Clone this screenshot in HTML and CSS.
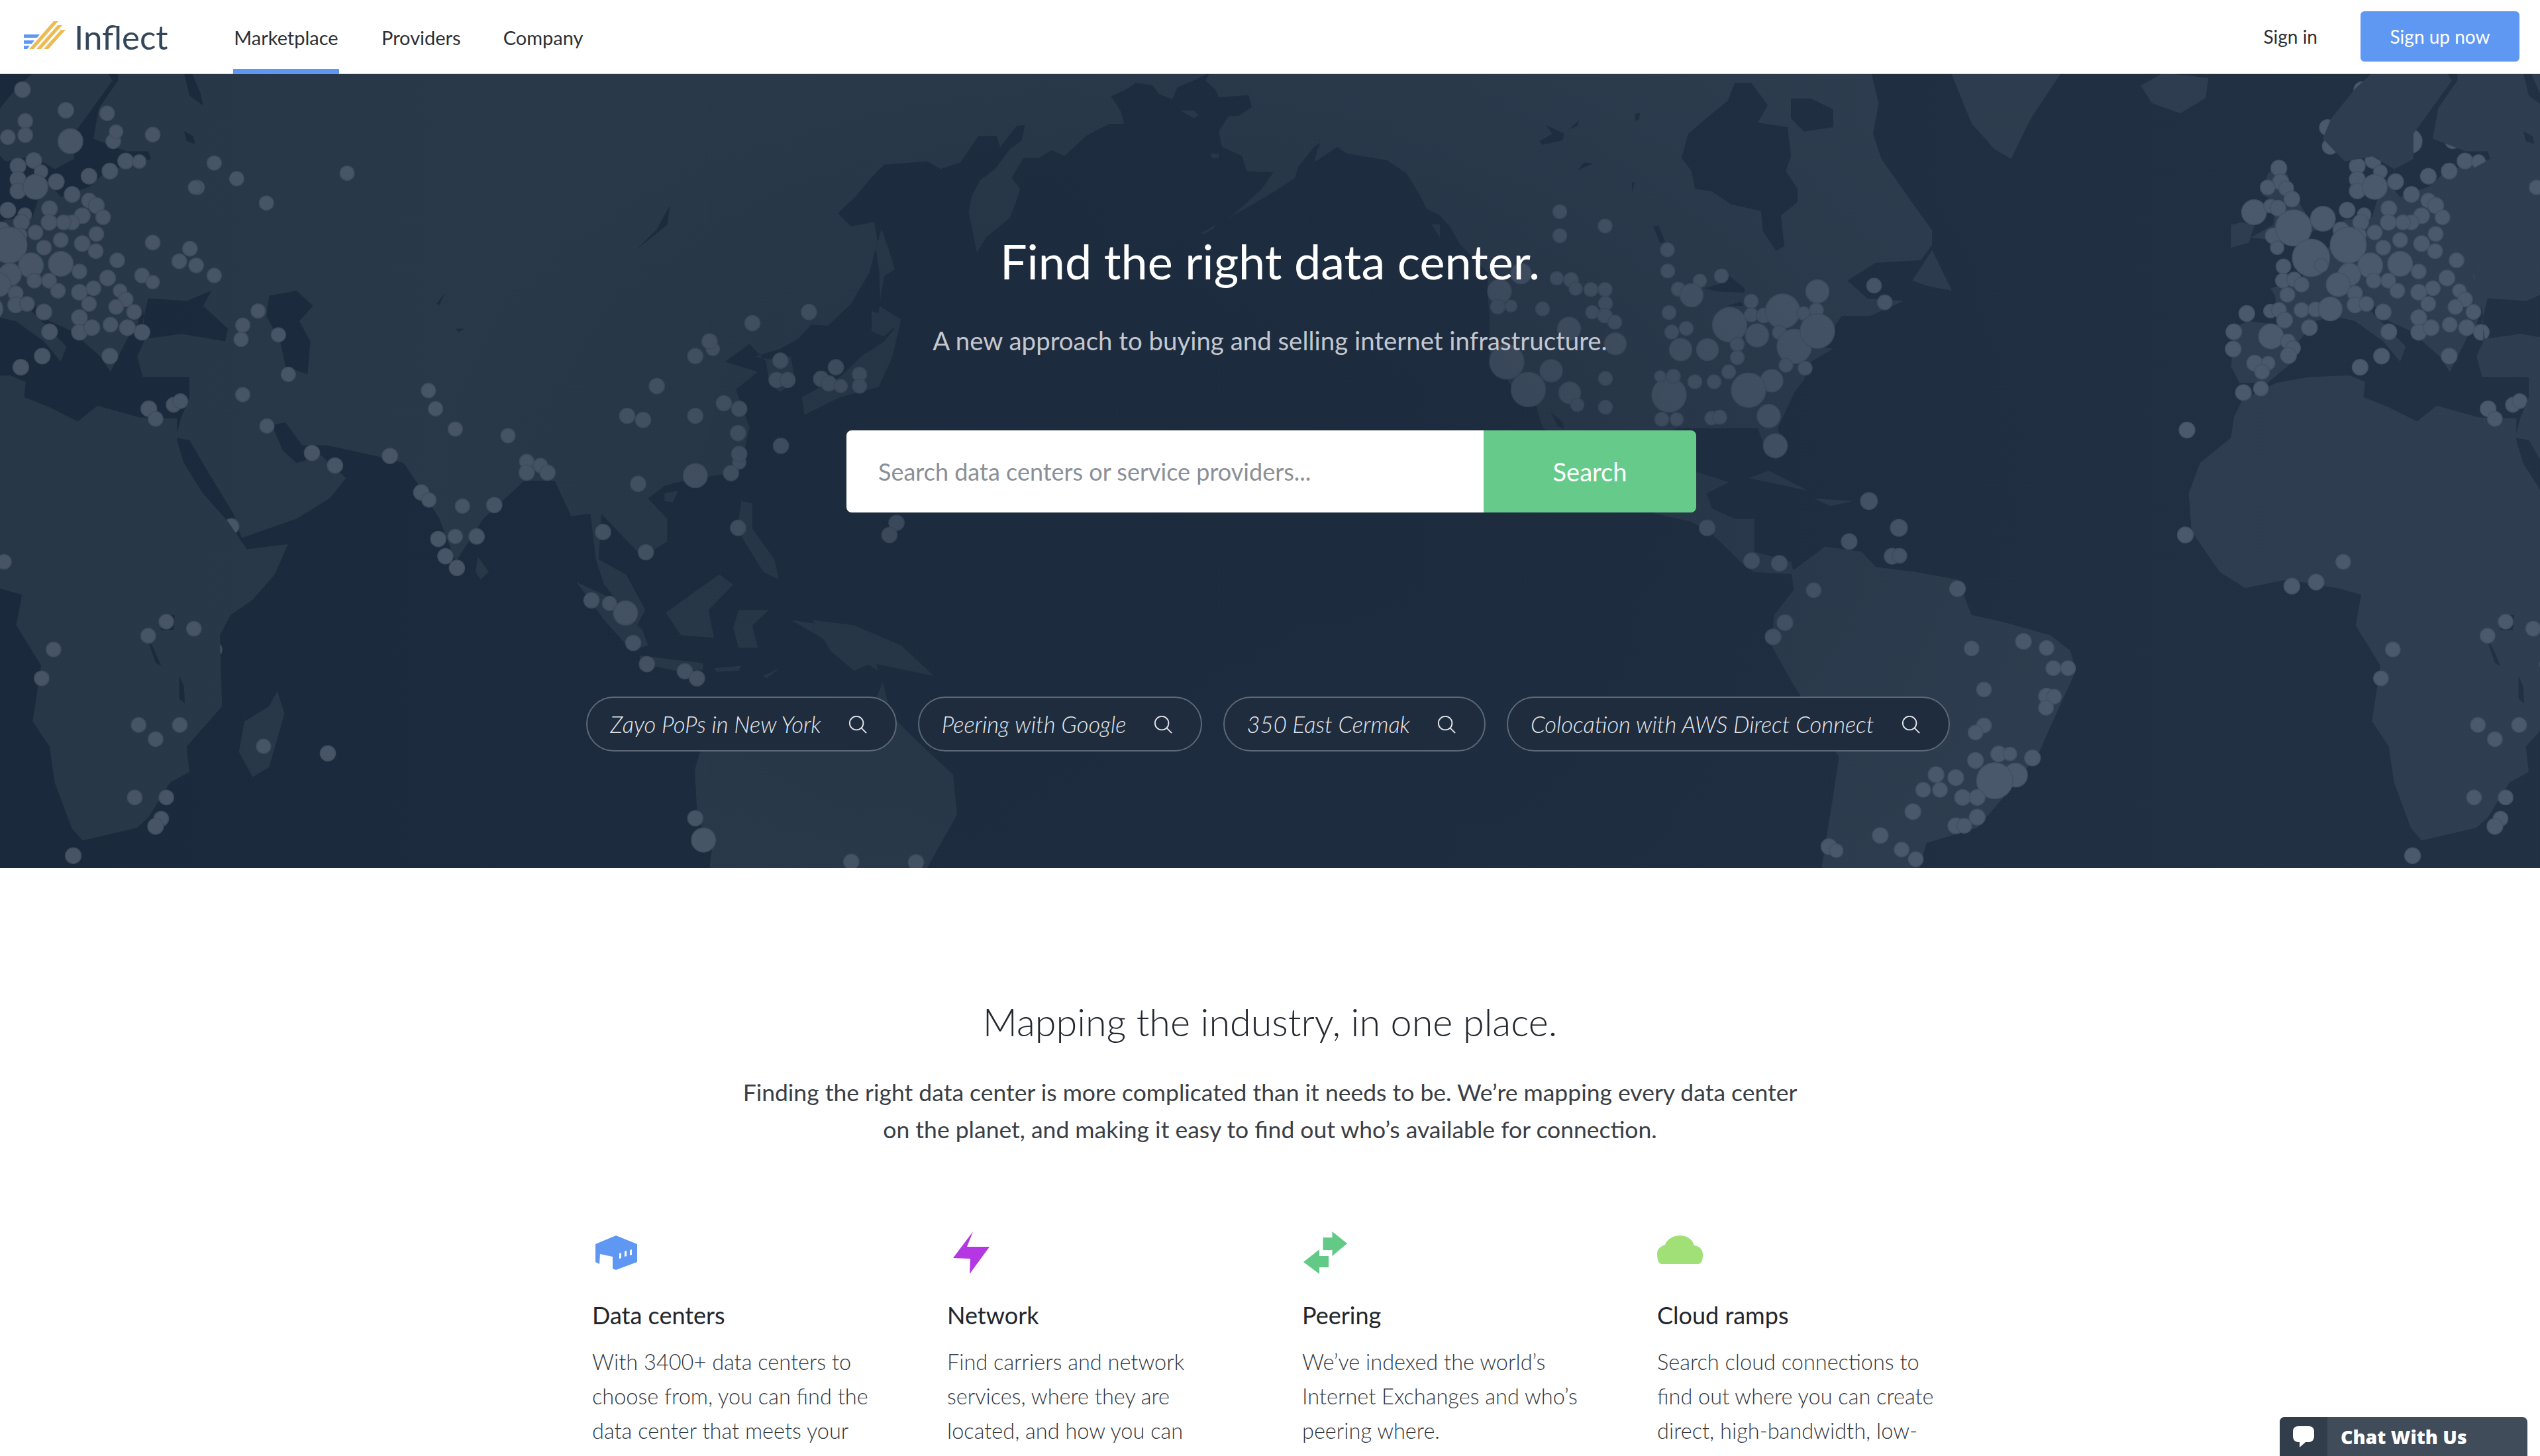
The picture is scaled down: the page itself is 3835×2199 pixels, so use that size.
FILE: index.html
```html
<!DOCTYPE html>
<html lang="en">
<head>
  <meta charset="UTF-8">
  <title>Inflect - Find the right data center</title>
  <link rel="stylesheet" href="styles.css">
</head>
<body>

  <!-- Top Bar -->
  <header class="topbar">
    <a class="brand" href="#">
      <svg class="brand-mark" viewBox="0 0 64 43" width="64" height="43">
        <path class="mark-blue" d="M0 20H24L20 25H0ZM0 29H16L12 34H0ZM0 37H9L5 42H0Z"/>
        <path class="mark-gold" d="M8 42L45 0H52L15 42ZM19 42L51 6H58L26 42ZM30 42L56 13H63L37 42Z"/>
      </svg>
      <span class="brand-name">Inflect</span>
    </a>
    <nav class="nav-links">
      <a class="nav-link active" href="#">Marketplace</a>
      <a class="nav-link" href="#">Providers</a>
      <a class="nav-link" href="#">Company</a>
    </nav>
    <div class="nav-right">
      <a class="sign-in" href="#">Sign in</a>
      <a class="sign-up" href="#">Sign up now</a>
    </div>
  </header>

  <!-- Hero -->
  <section class="hero">
    <svg class="map" viewBox="0 112 3835 1199" width="3835" height="1199">
      <g id="world">
        <!-- europe, africa and the americas traced at this scale -->
        <g transform="translate(2500 110) scale(.8514 .7653)">
          <path class="land" d="M1020 505L1050 490 1105 497 1098 440 1090 425 1140 410 1165 380 1205 330 1220 290 1270 285 1285 230 1290 205 1320 245 1370 225 1400 195 1445 180 1500 165 1500 300 1455 500 1440 520 1408 590 1390 560 1340 510 1300 490 1262 445 1268 470 1330 540 1320 570 1290 530 1240 490 1200 480 1170 490 1140 530 1125 575 1085 612 1035 612 1020 580 1025 530Z"/>
          <path class="land" d="M1105 175L1085 200 1075 240 1100 255 1095 300 1055 325 1130 335 1170 310 1135 245 1120 200Z"/>
          <path class="land" d="M1020 300L1040 295 1062 300 1052 335 1020 345Z"/>
          <path class="land" d="M860 25L900 0 980 10 975 50 930 80 880 60Z"/>
          <path class="land" d="M520 -10L725 -10 665 90 630 170 600 150 560 100Z"/>
          <path class="land" fill-rule="evenodd" d="M1025 680L1040 645 1100 612 1160 600 1230 597 1258 610 1255 640 1300 660 1350 688 1385 657 1460 680 1526 682 1526 725 1538 770 1572 830 1616 885 1650 940 1723 930 1699 990 1660 1040 1621 1070 1602 1110 1606 1250 1543 1330 1548 1380 1514 1400 1475 1470 1455 1490 1358 1515 1339 1490 1309 1400 1300 1330 1270 1280 1285 1170 1241 1090 1251 1030 1212 1018 1120 1000 1045 1017 1000 985 950 905 945 830 965 770 1020 720ZM1495 1072L1522 1070 1520 1100 1498 1100ZM1476 1125L1482 1130 1498 1170 1488 1165ZM1530 1190L1538 1210 1540 1245 1530 1235Z"/>
          <path class="land" d="M240 985L300 935 365 945 390 975 460 985 535 1000 560 1070 620 1085 700 1110 735 1140 745 1180 700 1290 680 1340 640 1400 570 1490 480 1520 460 1600 290 1600 325 1350 240 1200 205 1130 210 1070 245 1020Z"/>
          <path class="land" d="M455 410L490 350 525 430 480 420Z"/>
          <path class="land" d="M165 800L200 785 270 825 230 815ZM280 840L350 845 310 855Z"/>
        </g>
        <g transform="translate(1984 112) scale(.5 .3333)">
          <path class="land" fill-rule="evenodd" d="M-313 -10L-328 30-298 70-288 105-198 95-188 150-228 190-258 190-288 260-278 330-218 370-203 440-123 445-158 520-238 630-268 660-208 610-118 530-58 470-48 420 0 330 20 310 10 345 0 400 30 370 70 330 100 360 220 390 280 450 320 550 340 610 380 640 410 690 440 770 525 900 525 1010 530 1100 530 1280 600 1420 670 1500 690 1600 850 1800 1032 1992 1134 2026 1194 2072 1304 2233 1330 2256 1449 2267 1441 2210 1330 2164 1330 2015 1270 2015 1202 1968 1185 1900 1253 1849 1150 1800 1030 1640 1100 1604 1340 1604 1360 1690 1395 1750 1420 1690 1400 1604 1450 1444 1480 1384 1500 1304 1568 1244 1526 1234 1594 1096 1679 1096 1781 1027 1671 1016 1611 935 1696 855 1832 843 1866 775 1866 706 1832 637 1713 384 1688 270 1705 132 1679 -30ZM1110 380L1130 270 1200 180 1250 120 1270 40 1320 40 1370 140 1340 220 1430 240 1440 370 1425 440 1460 520 1460 580 1410 640 1420 780 1395 800 1355 710 1350 620 1260 590 1200 530 1150 520 1140 440ZM1440 110L1500 110 1568 160 1568 240 1480 260 1440 200ZM700 230L755 270 750 300 690 320 680 305 720 270ZM770 250L800 210 795 235ZM795 440L815 400 845 405 810 425ZM1025 690L1040 685 1060 760 1045 765ZM960 490L968 490 960 535ZM970 180L985 175 980 210 968 210ZM1180 970L1225 950 1250 910 1300 970 1300 990 1215 985ZM1250 1050L1290 1030 1295 1050ZM355 680L380 680 380 740ZM715 1534L750 1574 755 1609 735 1594Z"/>
        </g>
        <g transform="translate(1200 112) scale(.5 .3333)">
          <path class="land" d="M-20 -10L1015 -10 1030 40 1000 70 955 100 985 170 995 225 950 225 880 280 815 370 775 345 735 380 690 380 655 470 680 520 670 570 650 650 610 700 580 735 550 810 525 620 535 550 560 480 605 430 650 340 685 300 695 230 670 235 620 330 610 280 555 280 500 400 440 430 400 395 270 410 230 470 180 560 130 630 170 690 240 670 250 760 225 900 170 1040 100 1140 50 1135 10 1200 -20 1220Z"/>
          <path class="land" d="M1030 40L1015 -10 1255 -10 1210 25 1155 60 1140 115 1100 90 1080 50Z"/>
          <path class="land" d="M262 700L285 800 302 885 270 915 258 1020 255 900 245 790Z"/>
          <path class="land" d="M255 1050L320 1110 310 1150 230 1160 215 1200 250 1120Z"/>
          <path class="land" d="M1225 720L1245 705 1270 680 1265 700 1235 725ZM1165 165L1205 165 1220 185 1205 200ZM1255 360L1280 360 1280 380 1260 380Z"/>
        </g>
        <!-- asia and the islands -->
        <g transform="translate(0 110) scale(.8292 .7653)">
          <path class="land" fill-rule="evenodd" d="M215 -10L1500 -10 1500 470 1453 525 1420 545 1375 560 1400 565 1440 560 1448 610 1420 630 1400 610 1395 570 1365 535 1320 570 1380 590 1340 625 1365 700 1350 770 1330 790 1245 805 1210 815 1180 840 1215 880 1215 925 1170 955 1125 905 1095 870 1090 960 1140 990 1175 1060 1160 1090 1100 1010 1085 960 1075 870 1040 875 1010 805 955 805 880 880 830 965 800 880 760 810 735 770 680 755 595 735 550 735 520 690 495 695 515 745 540 770 585 755 630 800 600 840 540 880 440 918 425 870 380 790 345 725 320 720 330 680 345 640 345 600 260 600 250 560 262 530 262 480 245 400 225 200 275 170 270 155 230 155 170 130 180 70 215 15ZM270 445L340 450 385 430 370 460 415 505 410 530 330 515 265 525 260 490ZM490 440L540 430 570 460 545 490 565 530 560 595 520 580 510 530 485 480ZM1220 262L1215 300 1160 348 1195 310ZM795 455L810 435 800 458ZM830 505L845 505 835 512ZM335 0L345 45 370 65 365 40 345 -10ZM335 115L352 125 355 140 340 135Z"/>
          <path class="land" d="M70 -10L30 30-15 90-30 130 10 175 60 165 100 190 135 170 135 120 175 60 205 15 190 -10Z"/>
          <path class="land" d="M870 955L890 985 875 1000 866 985Z"/>
          <path class="land" d="M1050 1005L1100 1030 1170 1100 1180 1130 1150 1140 1100 1080Z"/>
          <path class="land" d="M1165 1150L1280 1165 1280 1178 1230 1180 1165 1165ZM1300 1175L1350 1170 1345 1180 1305 1182ZM1390 1190L1420 1175 1395 1195Z"/>
          <path class="land" d="M1310 990L1335 1010 1290 1060 1300 1115 1240 1110 1212 1065 1245 1040 1270 1020Z"/>
          <path class="land" d="M1345 1060L1400 1060 1370 1090 1380 1135 1345 1135 1335 1095Z"/>
          <path class="land" d="M1350 845L1370 850 1370 900 1410 960 1418 1000 1390 985 1350 915 1345 880Z"/>
          <path class="land" d="M1210 830L1235 825 1225 848 1210 845Z"/>
          <path class="land" d="M505 1220L518 1265 490 1370 460 1390 435 1340 445 1280 490 1250Z"/>
          <path class="land" d="M1568 560L1530 600 1460 640 1465 675 1530 640 1600 620 1625 560 1640 490 1610 530Z"/>
          <path class="land" d="M1440 1080L1570 1100 1600 1180 1520 1130Z"/>
        </g>
        <g transform="translate(1200 110) scale(.8929 .7653)">
          <path class="land" d="M30 1080L100 1090 180 1130 235 1190 130 1165 100 1180 60 1140Z"/>
          <path class="land" d="M130 470L180 490 150 520 130 510Z"/>
        </g>
        <path class="land" d="M1056 1137L1150 1090 1240 1085 1270 1085 1290 1060 1310 1085 1333 1030 1340 1060 1355 1090 1380 1115 1439 1170 1445 1230 1395 1320 1070 1320 1075 1280 1053 1235 1049 1163Z"/>
        <g id="dots"></g>
      </g>
      <use href="#world" x="-3532"/>
      <use href="#world" x="3532"/>
    </svg>
    <div class="hero-shade"></div>

    <div class="hero-content">
      <h1>Find the right data center.</h1>
      <p class="hero-sub">A new approach to buying and selling internet infrastructure.</p>
      <form class="search-form">
        <input class="search-input" type="text" placeholder="Search data centers or service providers...">
        <button class="search-button" type="button">Search</button>
      </form>
      <div class="chips">
        <a class="chip" href="#">Zayo PoPs in New York
          <svg class="chip-icon" viewBox="0 0 30 30" width="28" height="28"><circle cx="13" cy="13" r="11"/><path d="M21 21L29 29"/></svg>
        </a>
        <a class="chip" href="#">Peering with Google
          <svg class="chip-icon" viewBox="0 0 30 30" width="28" height="28"><circle cx="13" cy="13" r="11"/><path d="M21 21L29 29"/></svg>
        </a>
        <a class="chip" href="#">350 East Cermak
          <svg class="chip-icon" viewBox="0 0 30 30" width="28" height="28"><circle cx="13" cy="13" r="11"/><path d="M21 21L29 29"/></svg>
        </a>
        <a class="chip" href="#">Colocation with AWS Direct Connect
          <svg class="chip-icon" viewBox="0 0 30 30" width="28" height="28"><circle cx="13" cy="13" r="11"/><path d="M21 21L29 29"/></svg>
        </a>
      </div>
    </div>
  </section>

  <!-- Content -->
  <section class="intro">
    <h2>Mapping the industry, in one place.</h2>
    <p class="intro-text">Finding the right data center is more complicated than it needs to be. We’re mapping every data center<br>on the planet, and making it easy to find out who’s available for connection.</p>

    <div class="features">
      <div class="feature">
        <div class="feature-icon icon-datacenter">
          <svg viewBox="0 0 64 52" width="64" height="52"><path class="blue" fill-rule="evenodd" d="M0 13L31 0 63 13V40L31 52 26 50V32L7 28 6 43 0 40ZM36 27V35L39 34V26ZM44 24V32L47 31V23ZM52 22V30L55 29V21Z"/></svg>
        </div>
        <h3>Data centers</h3>
        <p>With 3400+ data centers to<br>choose from, you can find the<br>data center that meets your</p>
      </div>
      <div class="feature">
        <div class="feature-icon icon-network">
          <svg viewBox="0 0 55 65" width="55" height="65"><path class="purple" d="M30 0L21 23H55L25 64 26 41 0 40Z"/></svg>
        </div>
        <h3>Network</h3>
        <p>Find carriers and network<br>services, where they are<br>located, and how you can</p>
      </div>
      <div class="feature">
        <div class="feature-icon icon-peering">
          <svg viewBox="0 0 66 65" width="66" height="65"><path class="green" d="M43.5 0L66 18 43.5 37V28H29.5V9H43.5ZM24 27V37H38V54H24V64L0 46Z"/></svg>
        </div>
        <h3>Peering</h3>
        <p>We’ve indexed the world’s<br>Internet Exchanges and who’s<br>peering where.</p>
      </div>
      <div class="feature">
        <div class="feature-icon icon-cloud">
          <svg viewBox="0 0 69 43" width="69" height="43"><path class="lime" d="M7 43C2 43 0 36 0 27 0 20 6 16 12 14 15 5 25 0 35 0 46 0 54 7 56 15 64 16 69 21 69 29 69 37 67 43 62 43Z"/></svg>
        </div>
        <h3>Cloud ramps</h3>
        <p>Search cloud connections to<br>find out where you can create<br>direct, high-bandwidth, low-</p>
      </div>
    </div>
  </section>

  <!-- Chat -->
  <div class="chat">
    <span class="chat-icon">
      <svg viewBox="0 0 32 32" width="32" height="32"><path d="M8 0H24C29 0 32 3 32 8V15C32 20 29 24 24 24H19L10 32V24H8C3 24 0 20 0 15V8C0 3 3 0 8 0Z"/></svg>
    </span>
    <span class="chat-label">Chat With Us</span>
  </div>

  <script src="map.js"></script>
</body>
</html>
```

FILE: styles.css
```css
html, body {
  height: 100%;
  overflow: hidden;
}

body {
  margin: 0;
  font-family: "Lato", "Liberation Sans", sans-serif;
  color: #2b2f36;
  background-color: white;
}

a {
  text-decoration: none;
  color: inherit;
}

.topbar {
  height: 110px;
  padding: 0 31px 0 36px;
  display: flex;
  align-items: stretch;
  border-bottom: 2px solid #e1e4e9;
  background-color: white;
}

.brand {
  display: flex;
  align-items: center;
  gap: 12px;
  width: 316px;
}

.brand-mark {
  margin-top: -4px;
}

.mark-blue {
  fill: #5f98f2;
}

.mark-gold {
  fill: #ecbb55;
}

.brand-name {
  font-size: 51px;
  color: #34475a;
}

.nav-links {
  display: flex;
  gap: 64px;
}

.nav-link {
  display: flex;
  align-items: center;
  justify-content: center;
  font-size: 29px;
  height: 96px;
  padding-top: 8px;
  border-bottom: 8px solid transparent;
}

.nav-link.active {
  width: 160px;
  border-bottom-color: #5f98f2;
}

.nav-right {
  margin-left: auto;
  display: flex;
  align-items: center;
  gap: 65px;
  font-size: 28px;
}

.sign-up {
  width: 240px;
  height: 76px;
  display: flex;
  align-items: center;
  justify-content: center;
  color: white;
  background-color: #5f98f2;
  border-radius: 6px;
}

.hero {
  height: 1199px;
  position: relative;
  overflow: hidden;
  background-color: #1a293b;
}

.map {
  position: absolute;
  top: 0;
  left: 0;
}

.land {
  fill: #283748;
}

.dot {
  fill: #465466;
  stroke: #3e4c5e;
  stroke-width: 1.5;
}

.hero-shade {
  position: absolute;
  inset: 0;
  background:
    radial-gradient(ellipse 1250px 800px at 1900px 620px, rgba(27, 41, 59, 0.55), rgba(27, 41, 59, 0)),
    linear-gradient(90deg, rgba(255, 255, 255, 0), rgba(150, 175, 205, 0.06));
}

.hero-content {
  position: relative;
  display: flex;
  flex-direction: column;
  align-items: center;
  color: white;
}

h1 {
  margin: 232px 0 0;
  font-size: 72px;
  line-height: 100px;
  font-weight: 400;
}

.hero-sub {
  margin: 50px 0 0;
  font-size: 38.4px;
  line-height: 40px;
  color: #c3c8d0;
}

.search-form {
  margin: 116px 0 0 4px;
  display: flex;
  width: 1283px;
  height: 124px;
  border-radius: 8px;
  overflow: hidden;
}

.search-input {
  flex: 1;
  border: none;
  outline: none;
  padding: 0 48px;
  font-family: inherit;
  font-size: 36px;
  color: #333;
  background-color: white;
}

.search-input::placeholder {
  color: #8b8f96;
  opacity: 1;
}

.search-button {
  width: 321px;
  border: none;
  font-family: inherit;
  font-size: 38px;
  color: white;
  background-color: #66cb8a;
}

.chips {
  margin: 278px 0 0 -6px;
  display: flex;
  gap: 32px;
}

.chip {
  height: 83px;
  box-sizing: border-box;
  padding: 0 43px 0 34px;
  display: flex;
  align-items: center;
  gap: 41px;
  font-size: 34.6px;
  font-style: italic;
  font-weight: 300;
  color: #e6e9ed;
  border: 2px solid #5d6878;
  border-radius: 42px;
  background-color: #1f2c3d;
}

.chip-icon {
  fill: none;
  stroke: #e6e9ed;
  stroke-width: 2;
}

.intro {
  text-align: center;
}

h2 {
  margin: 199px 0 0;
  font-size: 57.5px;
  line-height: 66px;
  font-weight: 300;
  color: #23272e;
}

.intro-text {
  margin: 46px 0 0;
  font-size: 35.5px;
  line-height: 56px;
  color: #3a3e45;
}

.features {
  margin: 118px 0 0 894px;
  display: flex;
  text-align: left;
}

.feature {
  width: 536px;
}

.feature-icon {
  height: 80px;
  display: flex;
  align-items: center;
}

.icon-datacenter {
  padding-left: 5px;
}

.icon-network {
  padding-left: 9px;
}

.icon-peering {
  padding-left: 2px;
}

.icon-cloud svg {
  margin-top: -10px;
}

.blue {
  fill: #5f98f2;
}

.purple {
  fill: #b437e3;
}

.green {
  fill: #62c987;
}

.lime {
  fill: #a0e077;
}

h3 {
  margin: 32px 0 0;
  font-size: 36px;
  line-height: 44px;
  font-weight: 400;
  color: #22262c;
}

.feature p {
  margin: 23px 0 0;
  font-size: 32.5px;
  line-height: 52px;
  font-weight: 300;
  color: #33373e;
}

.chat {
  position: fixed;
  right: 19px;
  bottom: 0;
  width: 374px;
  height: 59px;
  display: flex;
  align-items: center;
  color: white;
  background-color: #414c5a;
  border-radius: 8px 8px 0 0;
  overflow: hidden;
}

.chat-icon {
  width: 72px;
  height: 100%;
  display: flex;
  align-items: center;
  justify-content: center;
  background-color: #323d4b;
}

.chat-icon svg {
  fill: white;
}

.chat-label {
  margin-left: 20px;
  font-family: "Open Sans", sans-serif;
  font-size: 28.5px;
  font-weight: 800;
}
```

FILE: map.js
```js
// data center dots, read off the map at a few different crops
const NS = "http://www.w3.org/2000/svg";
const layer = document.getElementById("dots");

const sets = [
  // north america
  { x: 1984, y: 300, sx: 0.5, sy: 0.3333, rs: 0.5, dots: [
    [742,59,21],[742,168,21],[879,124,21],[1067,232,21],[1068,328,21],[733,361,20],[776,368,22],[790,408,20],[836,412,21],[879,412,21],
    [625,340,31],[560,420,36],[555,490,22],[595,487,18],[690,500,21],[880,475,21],[840,515,20],[878,530,22],[908,560,21],[770,590,35],
    [910,658,33],[582,740,52],[716,780,34],[647,865,52],[772,880,33],[795,935,20],[880,815,21],[880,945,21],
    [1165,372,20],[1230,350,21],[1100,410,21],[1140,438,35],[1320,465,21],[1072,516,21],[1080,605,21],[1124,588,21],[1107,684,34],[1188,684,33],
    [1255,572,52],[1320,527,21],[1358,530,22],[1415,510,52],[1520,420,35],[1517,505,21],[1478,520,20],[1338,620,35],[1405,606,21],[1278,660,21],
    [1450,670,52],[1520,600,52],[1278,720,21],[1252,785,21],[1425,755,21],[1483,768,21],[1382,825,34],[1312,868,52],[1072,890,52],[1045,805,17],
    [1085,805,21],[1150,830,21],[1208,830,21],[1050,1000,21],[1095,1000,20],[1200,995,20],[1225,990,21],[1373,985,35],[1393,1120,36]
  ]},
  // atlantic side, south america, europe and africa
  { x: 2500, y: 110, sx: 0.8514, sy: 0.7653, rs: 0.8514, dots: [
    [387,420,13],[406,453,13],[378,845,15],[431,898,15],[343,925,14],[419,954,14],[432,953,13],[91,898,14],[170,963,14],[219,968,14],[280,1021,13],
    [535,1018,14],[229,1085,14],[208,1113,14],[560,1136,13],[652,1122,14],[693,1135,13],[705,1175,13],[731,1175,13],[693,1230,14],[706,1231,13],
    [692,1253,13],[582,1217,13],[582,1288,13],[567,1302,13],[608,1344,14],[628,1344,12],[668,1352,14],[567,1357,14],[497,1385,14],[532,1391,14],
    [474,1415,13],[504,1415,13],[638,1386,21],[601,1397,32],[544,1430,14],[570,1430,14],[456,1458,14],[570,1469,14],[532,1486,14],[547,1486,13],
    [398,1505,14],[436,1533,13],[307,1527,14],[320,1535,12],[461,1552,13],
    [1252,33,14],[1329,74,14],[1402,80,13],[1191,108,14],[1257,95,13],[1226,127,13],[1257,123,13],[1196,145,14],[1413,135,13],[1418,116,12],[1337,135,22],
    [1483,122,13],[1272,173,14],[1244,184,14],[1244,210,14],[1244,233,14],[1285,195,12],[1312,215,14],[1275,225,22],[1370,204,14],[1407,194,14],[1435,174,14],
    [1459,175,12],[1105,188,14],[1108,215,14],[1085,226,13],[1118,228,13],[1128,249,14],[1061,275,22],[1090,263,12],[1103,267,14],[1095,322,14],[1102,345,12],[1131,306,32],
    [1183,288,22],[1226,271,14],[1256,280,12],[1300,268,14],[1340,240,14],[1370,252,13],[1383,262,14],[1358,282,14],[1395,285,13],[1340,295,13],
    [1325,295,13],[1299,295,14],[1250,295,14],[1275,315,13],[1248,320,12],[1215,310,14],[1320,330,13],[1290,345,13],[1228,340,32],[1358,337,14],
    [1383,318,13],[1382,352,13],[1162,365,33],[1267,380,22],[1320,377,22],[1420,370,13],[1353,392,13],[1113,382,13],[1180,380,12],[1230,398,20],
    [1112,410,13],[1132,408,13],[1145,418,13],[1120,438,13],[1210,418,21],[1273,410,13],[1299,410,13],[1315,430,13],[1403,405,14],[1353,433,14],[1378,425,13],
    [1240,435,13],[1370,456,13],[1425,430,12],[1435,447,13],[1418,462,13],[1450,472,13],[1464,400,13],[1483,413,12],[1483,335,13],[1530,372,13],
    [1549,347,13],[1560,380,13],[1558,226,12],[1048,475,14],[1090,470,12],[1105,468,13],[1145,468,13],[1170,467,13],[1196,466,21],[1240,458,14],
    [1260,456,13],[1290,472,14],[1115,488,14],[1159,503,14],[1300,511,14],[1353,483,14],[1353,512,14],[1375,503,14],[1408,497,13],[1438,503,14],
    [1464,512,14],[1025,511,14],[1091,520,22],[1024,545,14],[1121,530,13],[1130,543,13],[1122,558,14],[1062,573,14],[1086,573,12],[1075,590,13],
    [1287,559,14],[1407,559,14],[1249,581,14],[1042,631,14],[1073,623,13],[942,705,14],[939,912,14],[1219,965,13],[1171,1005,14],[1128,1013,14],
    [1507,1083,13],[1556,1097,13],[1475,1111,13],[1307,1138,13],[1286,1195,13],[1458,1287,13],[1531,1287,13],[1488,1315,13],[1451,1430,13],
    [1507,1430,13],[1498,1472,13],[1488,1487,14],[1342,1545,14],[1476,663,14],[1488,683,13],[1520,655,13],[1532,648,13]
  ]},
  // asia and australia
  { x: 0, y: 110, sx: 0.8292, sy: 0.7653, rs: 0.8292, dots: [
    [632,198,13],[431,209,13],[390,178,13],[359,226,13],[485,257,13],[390,400,13],[470,470,13],[442,498,13],[439,526,13],[507,517,13],[525,595,13],
    [442,635,13],[486,697,13],[568,750,14],[610,775,14],[710,756,14],[780,627,13],[793,663,13],[829,703,13],[925,716,13],[959,767,13],[984,775,13],
    [959,789,14],[997,789,14],[767,828,14],[781,843,13],[842,855,13],[900,853,14],[798,920,14],[829,915,13],[868,915,14],[811,954,14],[832,977,14],
    [1098,906,14],[1176,946,14],[1077,1041,14],[1110,1047,13],[1139,1066,22],[1153,1125,14],[1178,1167,14],[1247,1181,14],[1269,1195,14],[1162,811,14],
    [1142,677,14],[1171,685,14],[1196,618,14],[1266,559,14],[1298,545,12],[1292,530,14],[1370,494,14],[1473,472,14],[1266,677,14],[1318,652,14],[1346,663,14],
    [1344,711,14],[1346,769,12],[1346,752,14],[1331,790,14],[1266,795,22],[1422,736,14],[1344,898,14],[1421,568,14],[1414,606,14],[1434,606,14],[1495,604,14],
    [1509,613,14],[1522,581,14],[1531,618,12],[1565,595,13],[1565,618,13],[1266,1471,14],[1281,1514,22],[1550,1557,14],[597,1343,14],[480,1329,13],
    [390,1138,14],[379,1167,14],[421,895,14],[429,937,14]
  ]},
  // pacific
  { x: 1200, y: 110, sx: 0.8929, sy: 0.7653, rs: 0.8929, dots: [
    [172,888,13],[160,912,13],[205,1558,13]
  ]}
];

sets.forEach((set) => {
  set.dots.forEach((d) => {
    const c = document.createElementNS(NS, "circle");
    c.setAttribute("class", "dot");
    c.setAttribute("cx", (set.x + d[0] * set.sx).toFixed(1));
    c.setAttribute("cy", (set.y + d[1] * set.sy).toFixed(1));
    c.setAttribute("r", (d[2] * set.rs).toFixed(1));
    layer.appendChild(c);
  });
});
```
